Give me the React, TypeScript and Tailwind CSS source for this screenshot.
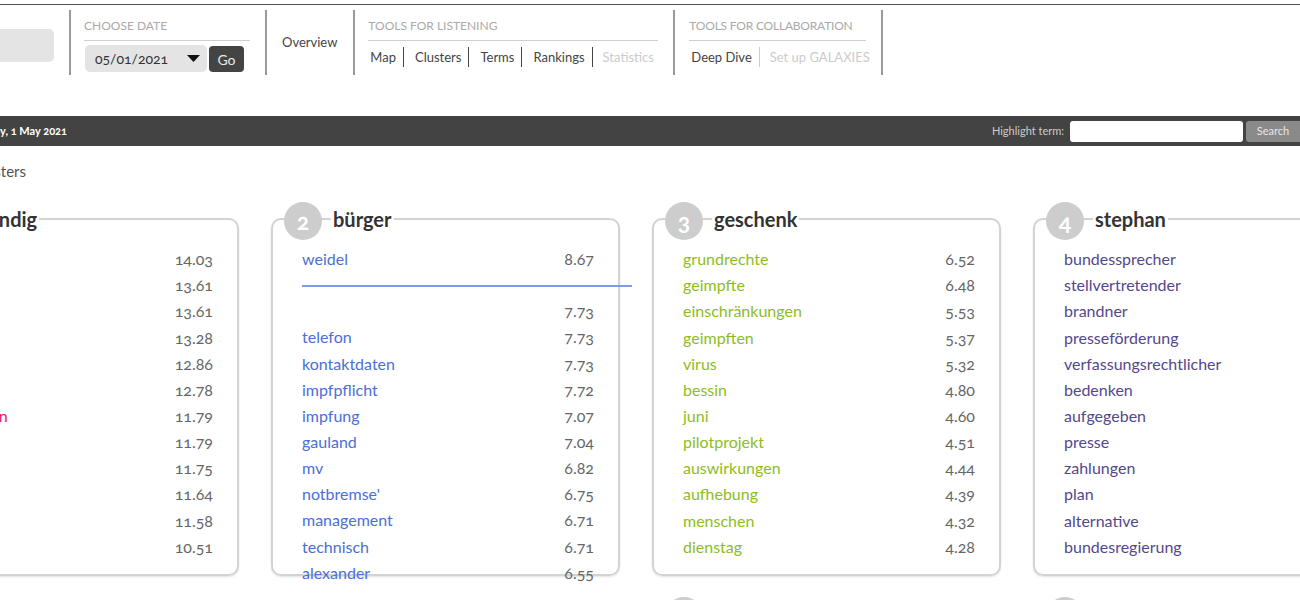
import React from "react";

type Row = { w: string; n: string; line?: boolean };

const card1: Row[] = [
  { w: "land", n: "14.03" },
  { w: "bund", n: "13.61" },
  { w: "regeln", n: "13.61" },
  { w: "schulen", n: "13.28" },
  { w: "kinder", n: "12.86" },
  { w: "eltern", n: "12.78" },
  { w: "maßnahmen", n: "11.79" },
  { w: "ämter", n: "11.79" },
  { w: "tests", n: "11.75" },
  { w: "ärzte", n: "11.64" },
  { w: "kita", n: "11.58" },
  { w: "kreis", n: "10.51" },
];

const card2: Row[] = [
  { w: "weidel", n: "8.67" },
  { w: "", n: "", line: true },
  { w: "", n: "7.73" },
  { w: "telefon", n: "7.73" },
  { w: "kontaktdaten", n: "7.73" },
  { w: "impfpflicht", n: "7.72" },
  { w: "impfung", n: "7.07" },
  { w: "gauland", n: "7.04" },
  { w: "mv", n: "6.82" },
  { w: "notbremse'", n: "6.75" },
  { w: "management", n: "6.71" },
  { w: "technisch", n: "6.71" },
  { w: "alexander", n: "6.55" },
];

const card3: Row[] = [
  { w: "grundrechte", n: "6.52" },
  { w: "geimpfte", n: "6.48" },
  { w: "einschränkungen", n: "5.53" },
  { w: "geimpften", n: "5.37" },
  { w: "virus", n: "5.32" },
  { w: "bessin", n: "4.80" },
  { w: "juni", n: "4.60" },
  { w: "pilotprojekt", n: "4.51" },
  { w: "auswirkungen", n: "4.44" },
  { w: "aufhebung", n: "4.39" },
  { w: "menschen", n: "4.32" },
  { w: "dienstag", n: "4.28" },
];

const card4: Row[] = [
  { w: "bundessprecher", n: "6.12" },
  { w: "stellvertretender", n: "5.98" },
  { w: "brandner", n: "5.71" },
  { w: "presseförderung", n: "5.40" },
  { w: "verfassungsrechtlicher", n: "5.22" },
  { w: "bedenken", n: "5.01" },
  { w: "aufgegeben", n: "4.87" },
  { w: "presse", n: "4.66" },
  { w: "zahlungen", n: "4.52" },
  { w: "plan", n: "4.41" },
  { w: "alternative", n: "4.30" },
  { w: "bundesregierung", n: "4.18" },
];

const filler: Row[] = [
  { w: "test", n: "4.10" },
  { w: "impfen", n: "4.02" },
  { w: "schule", n: "3.95" },
  { w: "öffnung", n: "3.90" },
];

function Card({
  num,
  title,
  rows,
  color,
  extra = "",
}: {
  num: number;
  title: string;
  rows: Row[];
  color: string;
  extra?: string;
}) {
  return (
    <div
      className={`relative w-[349px] h-[358px] shrink-0 rounded-[10px] border-2 border-[#d3d3d3] shadow-[0_1px_2px_rgba(0,0,0,0.12)] pt-[26px] pl-[29px] pr-[24px] ${extra}`}
    >
      <div className="absolute left-[11px] -top-[18px] w-[38px] h-[38px] rounded-full bg-[#cdcdcd] flex items-center justify-center text-white font-bold text-[23px] leading-none">
        {num}
      </div>
      <div className="absolute left-[58px] -top-[15px] bg-white px-[2px] text-[20px] leading-[28px] font-bold text-[#333] whitespace-nowrap">
        {title}
      </div>
      {rows.map((r, i) =>
        r.line ? (
          <div key={i} className="h-[26px] pt-[13px]">
            <div className="w-[330px] h-[2px] bg-[#7b9be8]" />
          </div>
        ) : (
          <div
            key={i}
            className="h-[26.17px] flex items-center justify-between text-[16px] leading-[26px] whitespace-nowrap"
          >
            <span className={color}>{r.w}</span>
            <span className="text-[#666]">{r.n}</span>
          </div>
        )
      )}
    </div>
  );
}

export default function App() {
  return (
    <div className="h-[600px] w-full overflow-hidden bg-white font-[Lato,'Noto_Sans',sans-serif] oldstyle-nums text-[#444]">
      <div className="h-[4px]" />
      <div className="h-px bg-[#555]" />

      {/* Header */}
      <div className="mt-[5px] flex h-[65px]">
        <div className="w-[69px] pt-[19px] shrink-0">
          <div className="-ml-[10px] w-[64px] h-[33px] rounded-[5px] bg-[#e4e4e4]" />
        </div>

        <div className="border-l-2 border-[#999] pl-[13px] pr-[15px]">
          <div className="pt-[8px] pb-[6px] w-[166px] border-b border-[#cfcfcf] text-[12px] leading-[16px] text-[#aaa] whitespace-nowrap">
            CHOOSE DATE
          </div>
          <div className="mt-[4px] flex">
            <div className="ml-px w-[122px] h-[27px] rounded-[5px] bg-[#e4e4e4] flex items-center justify-between pl-[10px] pr-[7px] text-[14px] text-[#333]">
              <span>05/01/2021</span>
              <svg width="13" height="7" viewBox="0 0 13 7">
                <path d="M0 0h13L6.5 7z" fill="#111" />
              </svg>
            </div>
            <div className="ml-[2px] mt-px w-[35px] h-[26px] rounded-[4px] bg-[#444] text-[#e8e8e8] text-[14px] flex items-center justify-center">
              Go
            </div>
          </div>
        </div>

        <div className="border-l-2 border-[#999] pl-[15px] pr-[16px] flex items-center text-[13px] text-[#444]">
          Overview
        </div>

        <div className="border-l-2 border-[#999] pl-[13px] pr-[15px]">
          <div className="pt-[8px] pb-[6px] w-[290px] border-b border-[#cfcfcf] text-[12px] leading-[16px] text-[#aaa] whitespace-nowrap">
            TOOLS FOR LISTENING
          </div>
          <div className="mt-[6px] flex text-[13px] leading-[20px] whitespace-nowrap">
            <span className="pl-[2px] pr-[7px]">Map</span>
            <span className="border-l border-[#444] pl-[11px] pr-[7px]">Clusters</span>
            <span className="border-l border-[#444] pl-[11px] pr-[7px]">Terms</span>
            <span className="border-l border-[#444] pl-[11px] pr-[7px]">Rankings</span>
            <span className="border-l border-[#444] pl-[10px] text-[#ccc]">Statistics</span>
          </div>
        </div>

        <div className="border-l-2 border-r-2 border-[#999] pl-[14px] pr-[15px]">
          <div className="w-[177px]">
            <div className="pt-[8px] pb-[6px] border-b border-[#cfcfcf] text-[12px] leading-[16px] tracking-[-0.2px] text-[#aaa] whitespace-nowrap">
              TOOLS FOR COLLABORATION
            </div>
            <div className="mt-[6px] flex text-[13px] leading-[20px] whitespace-nowrap">
              <span className="pl-[2px] pr-[7px]">Deep Dive</span>
              <span className="border-l border-[#ccc] pl-[10px] text-[#ccc]">Set up GALAXIES</span>
            </div>
          </div>
        </div>
      </div>

      {/* Dark bar */}
      <div className="mt-[41px] h-[30px] bg-[#434343] flex items-center justify-between">
        <div className="w-[67px] overflow-hidden flex justify-end whitespace-nowrap text-[11px] font-bold text-white">
          <span className="shrink-0">Saturday, 1 May 2021</span>
        </div>
        <div className="flex items-center">
          <span className="text-[11px] text-[#ccc] mr-[6px]">Highlight term:</span>
          <div className="w-[173px] h-[21px] rounded-[3px] bg-white" />
          <div className="ml-[3px] w-[54px] h-[21px] rounded-l-[3px] bg-[#8a8a8a] text-[#e6e6e6] text-[11px] flex items-center justify-center">
            Search
          </div>
        </div>
      </div>

      {/* Section title */}
      <div className="mt-[15px] w-[26px] overflow-hidden flex justify-end whitespace-nowrap text-[15px] leading-[20px] text-[#555]">
        <span className="shrink-0">Clusters</span>
      </div>

      {/* Cards */}
      <div className="mt-[37px] -ml-[110px] flex gap-[32px] items-start">
        <Card num={1} title="zuständig" rows={card1} color="text-[#e3166e]" />
        <Card num={2} title="bürger" rows={card2} color="text-[#4a6fd8]" />
        <Card num={3} title="geschenk" rows={card3} color="text-[#8dbd22]" />
        <Card num={4} title="stephan" rows={card4} color="text-[#54488c]" />
      </div>
      <div className="mt-[37px] -ml-[110px] flex gap-[32px] items-start">
        <Card num={5} title="impfung" rows={filler} color="text-[#e3166e]" extra="mt-[30px]" />
        <Card num={6} title="schule" rows={filler} color="text-[#4a6fd8]" extra="mt-[30px]" />
        <Card num={7} title="öffnung" rows={filler} color="text-[#8dbd22]" />
        <Card num={8} title="test" rows={filler} color="text-[#54488c]" />
      </div>
    </div>
  );
}
